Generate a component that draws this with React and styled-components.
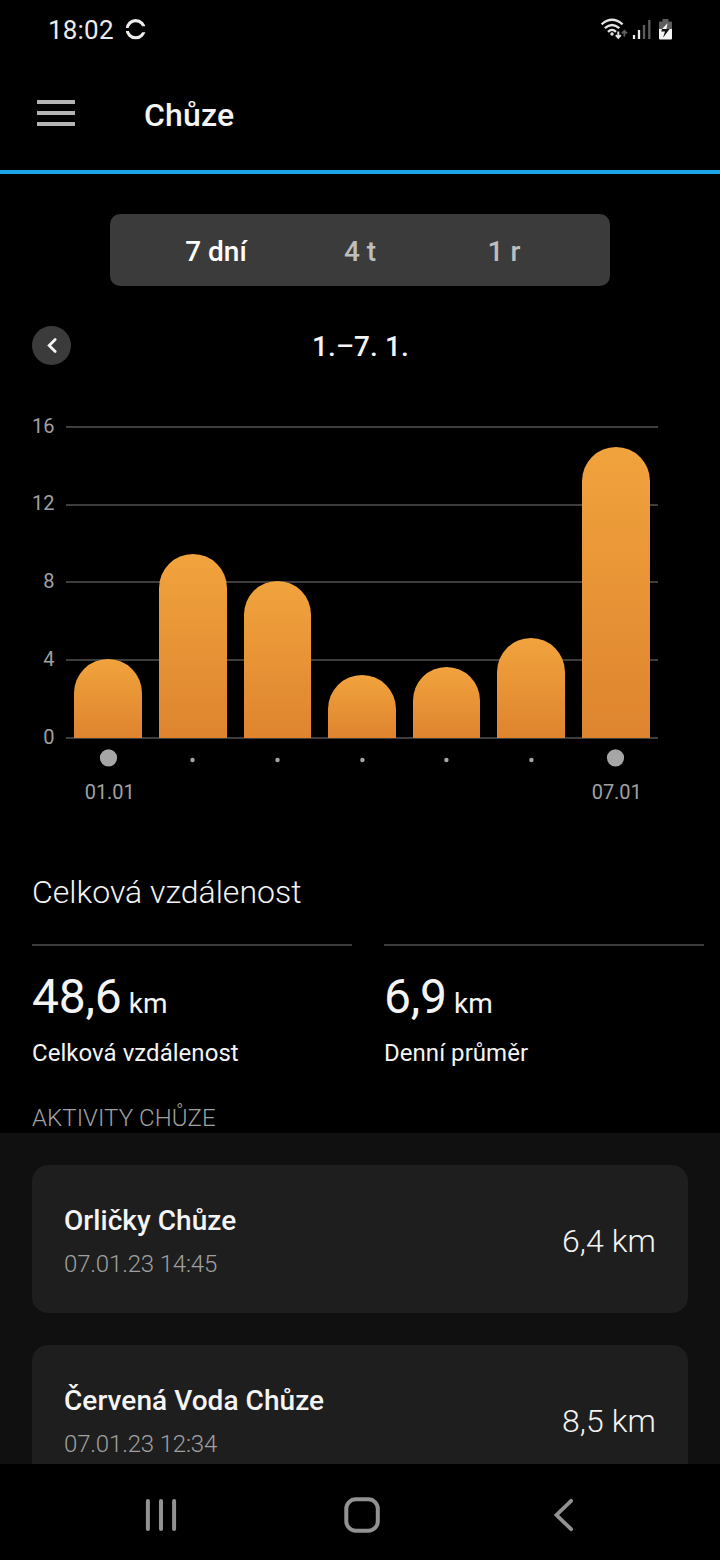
import React from "react";
import styled, { createGlobalStyle } from "styled-components";

const ranges = [
    { label: "7 dní", active: true },
    { label: "4 t" },
    { label: "1 r" },
];

const gridLines = [
    { value: 16, y: 27, textY: 33 },
    { value: 12, y: 105, textY: 110 },
    { value: 8, y: 182, textY: 188 },
    { value: 4, y: 260, textY: 266 },
    { value: 0, y: 338, textY: 344 },
];

// x, width and top of every bar, in chart units; dot is the centre of its day mark
const bars = [
    { x: 74, width: 68, top: 259, dot: 108.5, date: "01.01" },
    { x: 159, width: 68, top: 154, dot: 192.5 },
    { x: 244, width: 67, top: 181, dot: 277.5 },
    { x: 328, width: 68, top: 275, dot: 362.4 },
    { x: 413, width: 67, top: 267, dot: 446.4 },
    { x: 497, width: 68, top: 238, dot: 531.4 },
    { x: 582, width: 68, top: 47, dot: 615.5, date: "07.01" },
];

const totals = [
    { value: "48,6", unit: "km", label: "Celková vzdálenost" },
    { value: "6,9", unit: "km", label: "Denní průměr" },
];

const activities = [
    { name: "Orličky Chůze", date: "07.01.23 14:45", distance: "6,4 km" },
    { name: "Červená Voda Chůze", date: "07.01.23 12:34", distance: "8,5 km" },
];

function RingIcon() {
    return (
        <svg width="22" height="22" viewBox="0 0 22 22" fill="none">
            <clipPath id="ringGaps">
                <path d="M0 0 H22 V7.2 H11 V9 H0 Z M0 12 H11 V13.2 H22 V22 H0 Z" />
            </clipPath>
            <circle cx="10.7" cy="10.2" r="8.6" stroke="#ececec" strokeWidth="3.1" clipPath="url(#ringGaps)" />
        </svg>
    );
}

function StatusIcons() {
    return (
        <svg width="76" height="28" viewBox="598 16 76 28" fill="none">
            <g stroke="#e4e4e4" strokeWidth="2.3">
                <path d="M601.6 24.3 Q612 15.3 622.6 24.3" />
                <path d="M604.8 28.2 Q612 21.8 619.4 28.2" />
                <path d="M608 31.8 Q612 28 616 31.8" />
            </g>
            <circle cx="612" cy="34" r="1.7" fill="#e4e4e4" />
            <path d="M618.3 31.5 V37 M615.8 35.2 L618.3 37.8 L620.8 35.2" stroke="#e4e4e4" strokeWidth="1.9" />
            <path d="M624.4 36.5 V31 M621.9 33.4 L624.4 30.8 L626.9 33.4" stroke="#5d5d5d" strokeWidth="1.9" />
            <path d="M634 35 V39" stroke="#ececec" strokeWidth="2.3" />
            <path d="M639 30 V39" stroke="#ececec" strokeWidth="2.3" />
            <path d="M644 25 V39 M649.3 20 V39" stroke="#5d5d5d" strokeWidth="2.3" />
            <path d="M659 29 V22.5 Q659 21.5 660 21.5 H662.5 V19 H668.5 V21.5 H671 Q672 21.5 672 22.5 V29 Z" fill="#5d5d5d" />
            <path d="M659 29 H672 V38 Q672 39.5 671 39.5 H660 Q659 39.5 659 38 Z" fill="#f4f4f4" />
            <path d="M667.6 23.3 L661.8 29.2 H666.4 Z" fill="#f4f4f4" />
            <path d="M662 29 L661.2 31.6 H665 L663 37.8 L669.6 29 Z" fill="#111" />
        </svg>
    );
}

function Chart() {
    return (
        <ChartSvg viewBox="0 0 720 420">
            <defs>
                <linearGradient id="barFill" x1="0" y1="0" x2="0" y2="1">
                    <stop offset="0" stopColor="#f1a33d" />
                    <stop offset="1" stopColor="#de842f" />
                </linearGradient>
            </defs>
            {gridLines.map(({ value, y, textY }) => (
                <g key={value}>
                    <rect x="66" y={y - 1} width="592" height="2" fill="#3d3d3d" />
                    <AxisText x="54.5" y={textY} textAnchor="end">{value}</AxisText>
                </g>
            ))}
            {bars.map(({ x, width, top, dot, date }) => {
                const r = width / 2;
                return (
                    <g key={x}>
                        <path
                            d={`M${x} 338 V${top + r} A${r} ${r} 0 0 1 ${x + width} ${top + r} V338 Z`}
                            fill="url(#barFill)"
                        />
                        <circle cx={dot} cy={date ? 357.8 : 360} r={date ? 8.6 : 2.2} fill="#a6a6a6" />
                        {date && <DateText x={dot + 1.2} y="399" textAnchor="middle">{date}</DateText>}
                    </g>
                );
            })}
        </ChartSvg>
    );
}

function App() {
    return (
        <Screen>
            <GlobalStyle />
            <StatusBar>
                <Clock>18:02</Clock>
                <RingIcon />
                <StatusRight>
                    <StatusIcons />
                </StatusRight>
            </StatusBar>

            <Header>
                <MenuButton>
                    <MenuLine />
                    <MenuLine />
                    <MenuLine />
                </MenuButton>
                <Title>Chůze</Title>
            </Header>

            <RangeTabs>
                {ranges.map(({ label, active }) => (
                    <RangeTab key={label} $active={active}>{label}</RangeTab>
                ))}
            </RangeTabs>

            <PeriodRow>
                <PrevButton>
                    <svg width="39" height="39" viewBox="0 0 39 39" fill="none">
                        <path d="M23.2 13.4 L17.2 19.4 L23.2 25.4" stroke="#f4f4f4" strokeWidth="2.8" strokeLinecap="round" />
                    </svg>
                </PrevButton>
                <Period>1.–7. 1.</Period>
            </PeriodRow>

            <Chart />

            <SectionTitle>Celková vzdálenost</SectionTitle>
            <Totals>
                {totals.map(({ value, unit, label }) => (
                    <Total key={label}>
                        <TotalValue>
                            {value}
                            <Unit>{unit}</Unit>
                        </TotalValue>
                        <TotalLabel>{label}</TotalLabel>
                    </Total>
                ))}
            </Totals>

            <ListHeading>AKTIVITY CHŮZE</ListHeading>
            <ActivityList>
                {activities.map(({ name, date, distance }) => (
                    <ActivityCard key={name}>
                        <div>
                            <ActivityName>{name}</ActivityName>
                            <ActivityDate>{date}</ActivityDate>
                        </div>
                        <Distance>{distance}</Distance>
                    </ActivityCard>
                ))}
            </ActivityList>

            <NavBar>
                <svg width="36" height="36" viewBox="0 0 36 36" stroke="#929292" strokeWidth="4" strokeLinecap="round">
                    <path d="M4.9 4 V32 M18 4 V32 M31.1 4 V32" />
                </svg>
                <svg width="36" height="36" viewBox="0 0 36 36" fill="none" stroke="#929292" strokeWidth="4">
                    <rect x="2.3" y="2.3" width="31.5" height="31.4" rx="9.5" />
                </svg>
                <svg width="36" height="36" viewBox="0 0 36 36" fill="none" stroke="#929292" strokeWidth="3.8" strokeLinecap="round">
                    <path d="M26.1 3.8 L11.5 18 L26.1 32.2" />
                </svg>
            </NavBar>
        </Screen>
    );
}

export default App;

const GlobalStyle = createGlobalStyle`
    body {
        margin: 0;
        background: #000;
        font-family: Roboto, "Liberation Sans", sans-serif;
    }
    * {
        box-sizing: border-box;
    }
    svg {
        display: block;
    }
`;

const Screen = styled.div`
    width: 720px;
    height: 1560px;
    display: flex;
    flex-direction: column;
    overflow: hidden;
    background: #000;
    color: #f4f4f4;
`;

const StatusBar = styled.div`
    height: 60px;
    flex-shrink: 0;
    display: flex;
    align-items: center;
    padding: 0 46px 0 48px;
`;

const Clock = styled.div`
    width: 77px;
    font-size: 26px;
    line-height: 30px;
    letter-spacing: 0.2px;
    color: #ececec;
`;

const StatusRight = styled.div`
    margin-left: auto;
`;

const Header = styled.header`
    height: 114px;
    flex-shrink: 0;
    display: flex;
    align-items: flex-start;
    padding: 40px 37px 0;
    border-bottom: 4px solid #1ca3e8;
`;

const MenuButton = styled.button`
    width: 38px;
    padding: 0;
    display: flex;
    flex-direction: column;
    gap: 7px;
    border: none;
    background: none;
`;

const MenuLine = styled.span`
    height: 4px;
    background: #b4b4b4;
`;

const Title = styled.h1`
    margin: -4px 0 0 69px;
    font-size: 32px;
    line-height: 38px;
    font-weight: 500;
    letter-spacing: 0.15px;
`;

const RangeTabs = styled.div`
    width: 500px;
    height: 72px;
    flex-shrink: 0;
    margin: 40px auto 0;
    padding: 0 34px;
    display: grid;
    grid-template-columns: repeat(3, 1fr);
    align-items: center;
    border-radius: 10px;
    background: #3b3b3b;
`;

const RangeTab = styled.div`
    text-align: center;
    font-size: 28px;
    line-height: 34px;
    padding-top: 4px;
    font-weight: 500;
    color: ${(props) => (props.$active ? "#fff" : "#bebebe")};
`;

const PeriodRow = styled.div`
    height: 39px;
    flex-shrink: 0;
    margin-top: 40px;
    padding: 0 32px;
    display: grid;
    grid-template-columns: 39px 1fr 39px;
    align-items: center;
`;

const PrevButton = styled.button`
    width: 39px;
    height: 39px;
    padding: 0;
    border: none;
    border-radius: 50%;
    background: #3b3b3b;
`;

const Period = styled.div`
    padding: 3px 0 0 1px;
    text-align: center;
    font-size: 28px;
    line-height: 34px;
    font-weight: 500;
    letter-spacing: 0.1px;
`;

const ChartSvg = styled.svg`
    width: 720px;
    height: 420px;
    flex-shrink: 0;
    margin-top: 35px;
`;

const AxisText = styled.text`
    font-size: 20px;
    fill: #a0a0a0;
`;

const DateText = styled(AxisText)`
    letter-spacing: -0.1px;
`;

const SectionTitle = styled.h2`
    margin: 52px 32px 0;
    font-size: 32px;
    line-height: 40px;
    font-weight: 300;
`;

const Totals = styled.div`
    flex-shrink: 0;
    margin-top: 32px;
    padding: 0 16px 0 32px;
    display: grid;
    grid-template-columns: 1fr 1fr;
    column-gap: 32px;
`;

const Total = styled.div`
    height: 126px;
    border-top: 2px solid #3d3d3d;
`;

const TotalValue = styled.div`
    margin-top: 23px;
    font-size: 48px;
    line-height: 56px;
    letter-spacing: -0.2px;
`;

const Unit = styled.span`
    margin-left: 7.2px;
    font-size: 28px;
    letter-spacing: 0;
`;

const TotalLabel = styled.div`
    margin-top: 7px;
    font-size: 24px;
    line-height: 28px;
    letter-spacing: 0.04px;
`;

const ListHeading = styled.h3`
    margin: 34px 32px 0;
    height: 29px;
    flex-shrink: 0;
    font-size: 24px;
    line-height: 28px;
    font-weight: 300;
    letter-spacing: 0.06px;
    color: #a0a0a0;
`;

const ActivityList = styled.div`
    flex: 1;
    min-height: 0;
    overflow: hidden;
    display: flex;
    flex-direction: column;
    gap: 32px;
    padding: 32px 32px 0;
    background: #101010;
`;

const ActivityCard = styled.div`
    height: 148px;
    flex-shrink: 0;
    display: flex;
    justify-content: space-between;
    padding: 39px 32px 0;
    border-radius: 16px;
    background: #1e1e1e;
`;

const ActivityName = styled.div`
    font-size: 28px;
    line-height: 34px;
    font-weight: 500;
    letter-spacing: 0.05px;
`;

const ActivityDate = styled.div`
    margin-top: 12px;
    font-size: 24px;
    line-height: 28px;
    font-weight: 300;
    letter-spacing: -0.17px;
    color: #a0a0a0;
`;

const Distance = styled.div`
    margin-top: 17px;
    font-size: 32px;
    line-height: 40px;
    font-weight: 300;
    letter-spacing: 0.1px;
`;

const NavBar = styled.nav`
    height: 96px;
    flex-shrink: 0;
    display: flex;
    justify-content: space-between;
    padding: 33px 139px 0 143px;
    background: #000;
`;
